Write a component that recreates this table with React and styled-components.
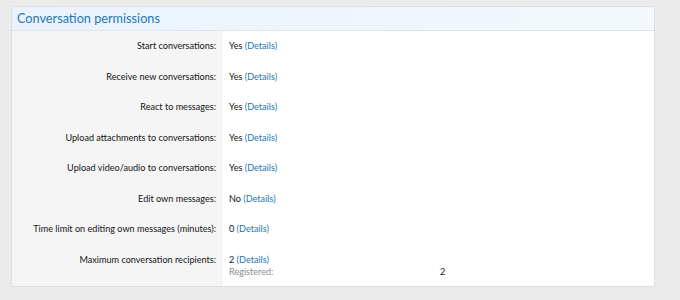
import React from 'react';
import styled, { createGlobalStyle } from 'styled-components';

const Global = createGlobalStyle`
  body {
    margin: 0;
    background: #ebebeb;
    font-family: Lato, "Open Sans", sans-serif;
  }
`;

const Page = styled.div`
  padding: 6px 25px 14px 11px;
  height: 300px;
  box-sizing: border-box;
`;

const Block = styled.div`
  background: #fff;
  border: 1px solid #dfdfdf;
  border-radius: 2px;
  overflow: hidden;
`;

const Header = styled.h2`
  margin: 0;
  height: 23px;
  padding: 0 5px;
  font-size: 12.7px;
  font-weight: 400;
  line-height: 23px;
  color: #2577b1;
  background: linear-gradient(to right, #eaf3fc, #f2f8fe);
  border-bottom: 1px solid #dde6ef;
`;

const Row = styled.div`
  display: grid;
  grid-template-columns: 211px 1fr;
`;

const Label = styled.div`
  background: #f5f5f5;
  text-align: right;
  white-space: nowrap;
  padding: 9px 7px 9px 0;
  font-size: 9.1px;
  line-height: 12.5px;
  color: #141414;
`;

const Value = styled.div`
  padding: ${(p) => (p.$last ? '9px 6px 7px' : '9px 6px')};
  font-size: 9.1px;
  line-height: 12.5px;
  color: #141414;
`;

const Link = styled.a`
  color: #2577b1;
  text-decoration: none;
`;

const Sub = styled.div`
  display: grid;
  grid-template-columns: 211px auto;
  color: #8c8c8c;
  span + span {
    color: #141414;
  }
`;

const rows = [
  ['Start conversations:', 'Yes'],
  ['Receive new conversations:', 'Yes'],
  ['React to messages:', 'Yes'],
  ['Upload attachments to conversations:', 'Yes'],
  ['Upload video/audio to conversations:', 'Yes'],
  ['Edit own messages:', 'No'],
  ['Time limit on editing own messages (minutes):', '0'],
];

export default function App() {
  return (
    <>
      <Global />
      <Page>
        <Block>
          <Header>Conversation permissions</Header>
          {rows.map(([label, value]) => (
            <Row key={label}>
              <Label>{label}</Label>
              <Value>
                {value} <Link href="#">(Details)</Link>
              </Value>
            </Row>
          ))}
          <Row>
            <Label>Maximum conversation recipients:</Label>
            <Value $last>
              2 <Link href="#">(Details)</Link>
              <Sub>
                <span>Registered:</span>
                <span>2</span>
              </Sub>
            </Value>
          </Row>
        </Block>
      </Page>
    </>
  );
}
